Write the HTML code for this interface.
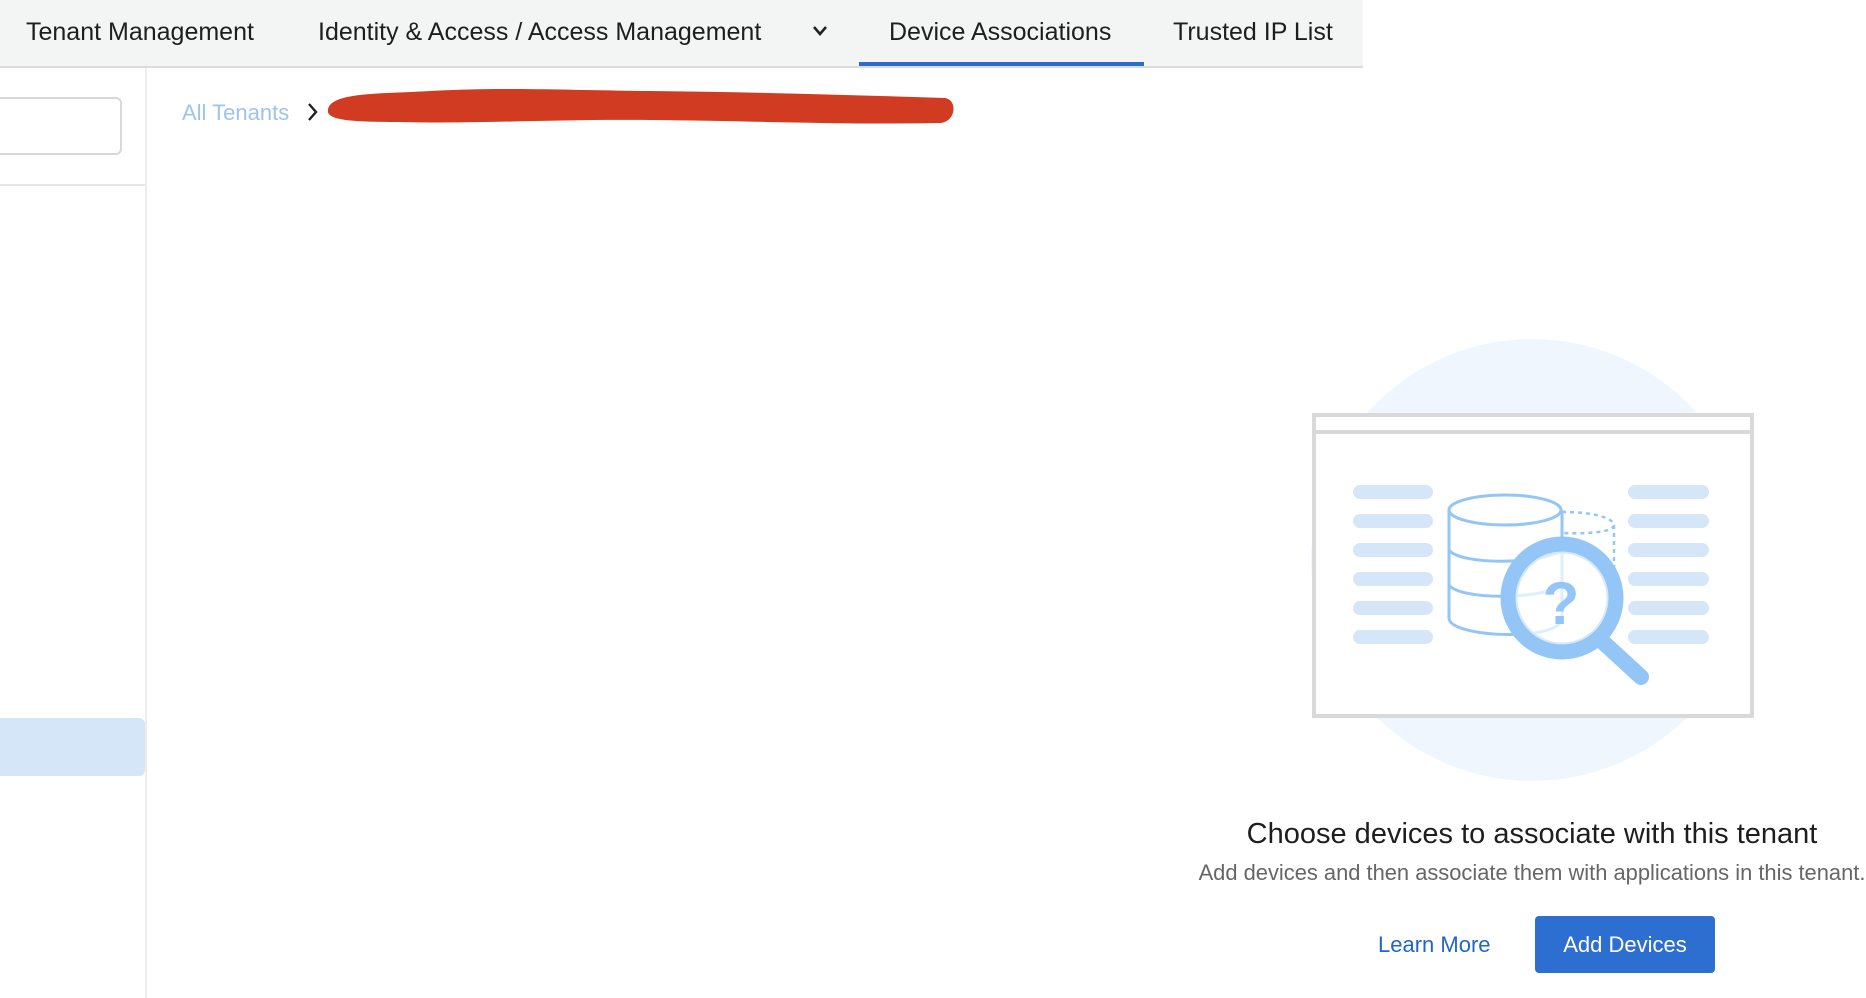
<!DOCTYPE html>
<html><head><meta charset="utf-8"><style>
html,body{margin:0;padding:0;width:1866px;height:998px;overflow:hidden;background:#fff;font-family:"Liberation Sans",sans-serif;}
.top{position:absolute;left:0;top:0;width:1363px;height:66px;background:#f3f4f4;border-bottom:2px solid #dcdcdc;}
.tab{position:absolute;top:18px;font-size:25px;color:#1e1e1e;white-space:nowrap;}
.ul{position:absolute;left:859px;top:62px;width:285px;height:4px;background:#2b6ccd;}
.side{position:absolute;left:0;top:68px;width:145px;height:930px;border-right:2px solid #ececec;}
.search{position:absolute;left:-10px;top:97px;width:132px;height:58px;border:2px solid #d8d8d8;border-radius:6px;box-sizing:border-box;}
.hl{position:absolute;left:0;top:184px;width:145px;height:2px;background:#e6e6e6;}
.sel{position:absolute;left:0;top:718px;width:145px;height:58px;background:#d4e6f8;border-radius:0 6px 6px 0;}
.bc{position:absolute;left:182px;top:100px;font-size:22px;color:#9ec3ef;}
.t1{position:absolute;left:1032px;width:1000px;top:818px;text-align:center;font-size:29px;color:#1e1e1e;white-space:nowrap;}
.t2{position:absolute;left:1032px;width:1000px;top:860px;text-align:center;font-size:21.9px;color:#666;white-space:nowrap;}
.lm{position:absolute;left:1378px;top:932px;font-size:22px;color:#2166c8;}
.btn{position:absolute;left:1535px;top:916px;width:180px;height:57px;background:#2d6fd0;border-radius:4px;color:#fff;font-size:22px;text-align:center;line-height:57px;}
</style></head><body>
<div class="top">
<div class="tab" style="left:26px">Tenant Management</div>
<div class="tab" style="left:318px">Identity &amp; Access / Access Management</div>
<svg style="position:absolute;left:812px;top:25px" width="16" height="12"><path d="M2 2 L8 9 L14 2" stroke="#222" stroke-width="2.6" fill="none"/></svg>
<div class="tab" style="left:889px">Device Associations</div>
<div class="tab" style="left:1173px">Trusted IP List</div>
<div class="ul"></div>
</div>
<div class="side"><div class="search" style="top:29px"></div><div class="hl" style="top:116px"></div><div class="sel" style="top:650px"></div></div>
<div class="bc">All Tenants</div>
<svg style="position:absolute;left:306px;top:102px" width="14" height="20"><path d="M3 2 L10 10 L3 18" stroke="#222" stroke-width="2.4" fill="none"/></svg>
<svg style="position:absolute;left:0;top:0" width="1866" height="998">
<path d="M328 110 C330 92 380 94 430 91 C500 87 560 90 650 91 C750 92 850 95 945 98 C958 100 956 122 940 123 C850 125 760 121 650 120 C550 119 480 124 400 122 C350 122 326 120 328 110Z" fill="#d13b22"/>
<circle cx="1532" cy="560" r="221" fill="#eff6fd"/>
<rect x="1314" y="415" width="438" height="301" fill="#fff" stroke="#d9d9d9" stroke-width="4"/>
<line x1="1314" y1="432" x2="1752" y2="432" stroke="#d9d9d9" stroke-width="4"/>
<g stroke="#d4e6f8" stroke-width="14" stroke-linecap="round">
<path d="M1360 492H1426M1360 521H1426M1360 550H1426M1360 579H1426M1360 608H1426M1360 637H1426"/>
<path d="M1635 492H1702M1635 521H1702M1635 550H1702M1635 579H1702M1635 608H1702M1635 637H1702"/>
</g>
<g fill="none" stroke="#93c6f7" stroke-width="3">
<path d="M1562 512 C1600 512 1614 520 1614 525 C1614 532 1590 534 1562 533 M1614 525 V580" stroke-dasharray="4 4" stroke-width="2.5"/>
<path d="M1449 510 V618 C1449 638 1562 642 1562 618 V510"/>
<ellipse cx="1505" cy="510" rx="56" ry="15" fill="#fff"/>
<path d="M1449 550 C1460 565 1540 565 1562 550 M1449 585 C1460 600 1540 600 1562 585"/>
</g>
<circle cx="1562" cy="598" r="47" fill="#fff" fill-opacity="0.7" stroke="#d6e9fc" stroke-width="5"/>
<circle cx="1562" cy="598" r="54" fill="none" stroke="#93c6f7" stroke-width="15"/>
<line x1="1604" y1="643" x2="1641" y2="677" stroke="#93c6f7" stroke-width="16" stroke-linecap="round"/>
<text x="1561" y="624" font-size="60" font-weight="bold" fill="#93c6f7" text-anchor="middle" font-family="Liberation Sans, sans-serif">?</text>
</svg>
<div class="t1">Choose devices to associate with this tenant</div>
<div class="t2">Add devices and then associate them with applications in this tenant.</div>
<div class="lm">Learn More</div>
<div class="btn">Add Devices</div>
</body></html>
